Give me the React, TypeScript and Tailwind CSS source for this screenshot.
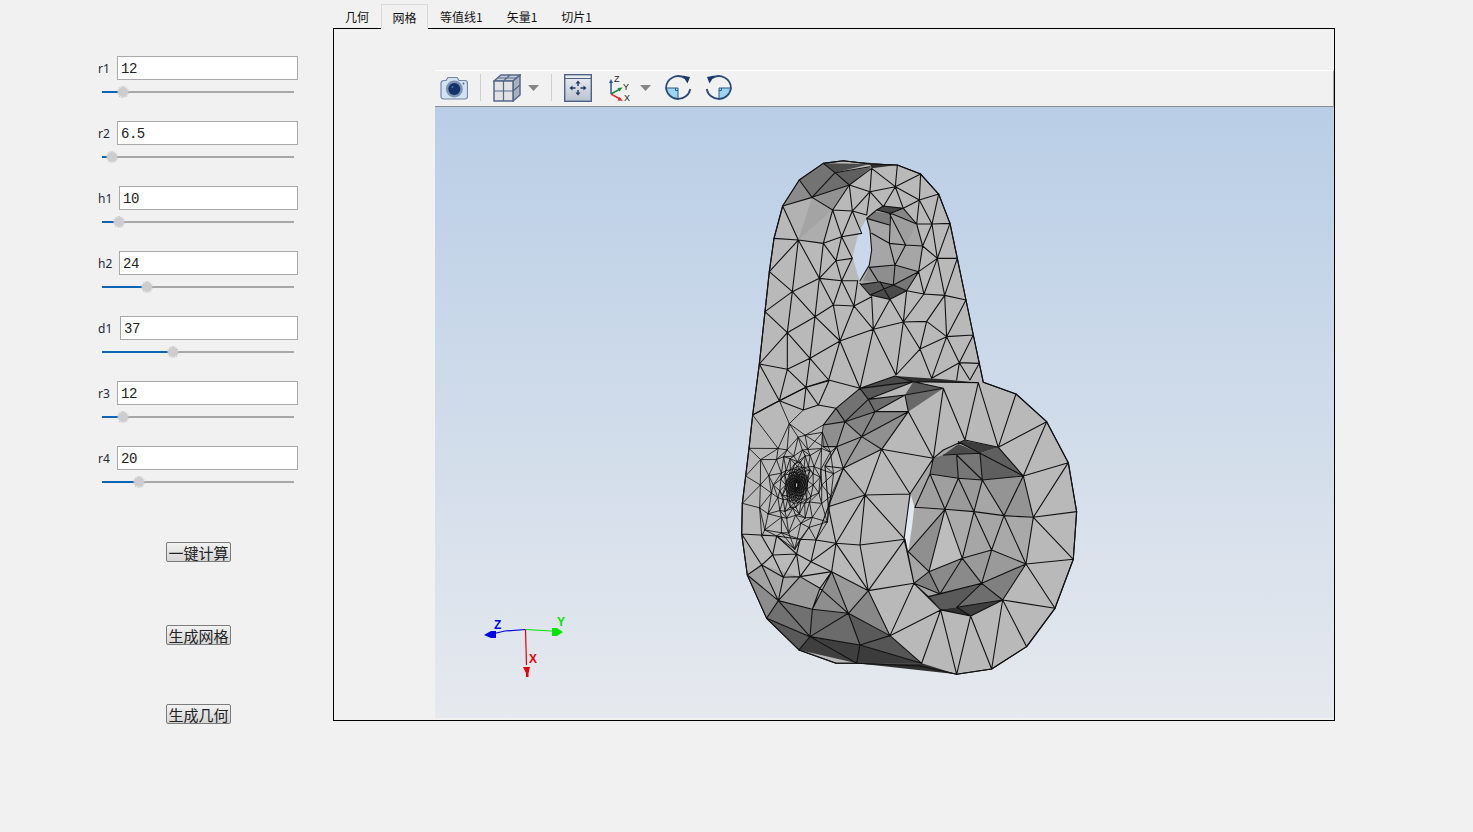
import React from 'react'

const params = [
  { label: 'r1', value: '12', thumb: 123, labelClass: 'w-[19px]' },
  { label: 'r2', value: '6.5', thumb: 112, labelClass: 'w-[19px]' },
  { label: 'h1', value: '10', thumb: 119, labelClass: 'w-[21px]' },
  { label: 'h2', value: '24', thumb: 147, labelClass: 'w-[21px]' },
  { label: 'd1', value: '37', thumb: 173, labelClass: 'w-[22px]' },
  { label: 'r3', value: '12', thumb: 123, labelClass: 'w-[19px]' },
  { label: 'r4', value: '20', thumb: 139, labelClass: 'w-[19px]' },
]

const tabs = ['几何', '网格', '等值线1', '矢量1', '切片1']

// all mesh data is in 3x units, origin at (730,370) of the page
const outline =
  '280,-620 340,-628 420,-618 502,-615 572,-588 626,-528 660,-440 682,-335 708,-210 730,-105 748,-20 760,37 858,72 950,155 1015,278 1040,425 1030,568 975,715 890,830 785,897 680,913 570,888 380,880 318,880 207,840 110,745 52,615 35,492 37,400 47,318 57,235 68,135 88,-18 105,-175 118,-295 132,-395 158,-492 208,-570'

const holeTop =
  '410,-455 440,-480 460,-492 520,-485 560,-438 578,-372 566,-295 530,-238 480,-212 420,-225 390,-260 418,-315 425,-360 420,-420'
const openingTop = '410,-455 420,-420 425,-360 418,-315 390,-268 383,-285 368,-340 385,-410'
const holeFront =
  '610,265 640,240 705,210 805,232 880,318 910,442 888,582 818,690 722,738 632,720 552,640 530,540 522,508 540,372'
const openingFront = '543,375 553,410 546,470 535,542 522,508 530,440'

const shades: [string, string][] = [
  // top of the lug
  ['#4c4c4c', '280,-620 420,-618 315,-592'],
  ['#2e2e2e', '340,-628 502,-615 425,-605 420,-618'],
  ['#5f5f5f', '315,-592 425,-608 358,-555'],
  ['#737373', '208,-570 280,-620 315,-592 246,-518'],
  ['#6e6e6e', '246,-518 315,-592 358,-555'],
  ['#8b8b8b', '158,-492 208,-570 246,-518'],
  ['#929292', '246,-518 358,-555 308,-480'],
  ['#b2b2b2', '158,-492 246,-518 205,-390'],
  ['#a4a4a4', '246,-518 308,-480 205,-390'],
  ['#adadad', '205,-390 308,-480 280,-380'],
  // lug hole
  ['#7a7a7a', '410,-455 430,-475 482,-470 478,-435'],
  ['#454545', '440,-480 460,-492 520,-485 482,-470'],
  ['#868686', '482,-470 520,-485 560,-438'],
  ['#9e9e9e', '482,-470 560,-438 527,-375'],
  ['#8e8e8e', '418,-308 495,-315 566,-295 490,-255 445,-265 400,-268'],
  ['#585858', '395,-257 450,-265 490,-255 420,-225'],
  ['#4a4a4a', '420,-225 490,-255 530,-238 480,-212'],
  ['#777777', '490,-255 566,-295 530,-238'],
  // shoulder of the boss
  ['#4a4a4a', '495,18 550,35 390,55'],
  ['#2f2f2f', '495,18 640,28 745,38 550,35'],
  ['#585858', '390,55 550,35 415,88'],
  ['#5a5a5a', '550,35 640,55 525,75'],
  ['#6b6b6b', '415,88 525,75 435,125'],
  ['#696969', '525,75 640,55 535,125'],
  ['#727272', '390,55 415,88 345,155 318,115'],
  ['#6f6f6f', '415,88 435,125 345,155'],
  ['#848484', '435,125 535,125 395,200 345,155'],
  ['#909090', '535,125 455,238 395,200'],
  ['#838383', '318,115 345,155 280,165'],
  ['#8f8f8f', '280,165 345,155 320,230 280,230'],
  ['#9a9a9a', '395,200 455,238 340,295 320,230'],
  ['#989898', '345,155 395,200 320,230'],
  ['#acacac', '340,295 405,375 295,410'],
  // bottom edge
  ['#a8a8a8', '95,585 210,620 145,692'],
  ['#a2a2a2', '52,615 95,585 145,692'],
  ['#8c8c8c', '52,615 145,692 110,745'],
  ['#9c9c9c', '145,692 210,620 270,655 247,718'],
  ['#717171', '145,692 247,718 240,800 110,745'],
  ['#6b6b6b', '247,718 355,730 390,825 240,800'],
  ['#5a5a5a', '355,730 480,797 390,825'],
  ['#595959', '110,745 240,800 207,840'],
  ['#3f3f3f', '240,800 390,825 380,880 207,840'],
  ['#3c3c3c', '390,825 575,880 380,880'],
  ['#565656', '480,797 575,880 390,825'],
  ['#2f2f2f', '380,880 575,880 680,913'],
  ['#888888', '415,662 480,797 355,730'],
  ['#9a9a9a', '305,605 415,662 355,730'],
  ['#8e8e8e', '247,718 305,605 355,730'],
  // front hole
  ['#3d3d3d', '685,218 705,212 805,232 750,250'],
  ['#4a4a4a', '640,255 685,222 750,250'],
  ['#5f5f5f', '750,250 805,232 880,318 757,330'],
  ['#707070', '610,265 640,255 680,255 685,325 600,312'],
  ['#777777', '680,255 750,250 757,330 685,325'],
  ['#9f9f9f', '600,312 685,325 645,418 555,412'],
  ['#9a9a9a', '685,325 757,330 732,425 645,418'],
  ['#949494', '757,330 880,318 910,442 822,437'],
  ['#8f8f8f', '645,418 535,545 597,605'],
  ['#bdbdbd', '645,418 697,565 597,605'],
  ['#ababab', '645,418 732,425 697,565'],
  ['#a6a6a6', '732,425 822,437 785,540 697,565'],
  ['#a9a9a9', '822,437 910,442 888,582 785,540'],
  ['#9a9a9a', '785,540 888,582 755,640 697,565'],
  ['#808080', '888,582 818,690 755,640'],
  ['#8a8a8a', '697,565 755,640 630,672 597,605'],
  ['#7f7f7f', '552,640 597,605 630,672'],
  ['#5a5a5a', '595,680 755,640 680,712 630,718'],
  ['#6e6e6e', '755,640 818,690 680,712'],
  ['#3f3f3f', '680,712 818,690 722,738'],
  ['#2f2f2f', '630,718 680,712 722,738'],
]

// edges of the lug, y measured 660 above the rest
const lugEdges =
  'M208 90L246 142M246 142L315 68M315 68L280 40M315 68L358 105M358 105L425 55M315 68L420 50M246 142L358 105M158 168L246 142M246 142L308 180M358 105L308 180M358 105L420 125M425 55L420 125M425 55L496 110M502 45L496 110M496 110L572 72M496 110L420 125M496 110L568 150M572 72L568 150M568 150L626 132M568 150L606 222M626 132L606 222M606 222L660 220M606 222L622 325M660 220L622 325M622 325L682 325M568 150L560 222M560 222L606 222M560 222L578 288M606 222L578 288M578 288L622 325M578 288L566 365M622 325L566 365M622 325L582 432M682 325L644 436M622 325L644 436M644 436L708 450M582 432L644 436M566 365L582 432M530 422L582 432M582 432L520 516M644 436L590 514M520 516L590 514M590 514L650 560M644 436L650 560M708 450L650 560M650 560L730 555M650 560L688 638M730 555L688 638M688 638L748 640M650 560L570 597M590 514L570 597M520 516L570 597M520 516L430 538M520 516L498 675M570 597L498 675M570 597L605 685M650 560L605 685M688 638L605 685M688 638L680 690M688 638L720 690M748 640L720 690' +
  'M420 125L367 183M358 105L367 183M308 180L367 183M367 183L410 195M420 125L410 195M420 125L460 170M496 110L460 170M496 110L520 175M568 150L520 175M367 183L335 260M308 180L335 260M308 180L280 280M280 280L335 260M335 260L395 250M367 183L395 250M280 280L318 332M335 260L318 332M335 260L367 325M318 332L367 325M205 270L280 280M205 270L132 265M205 270L158 168M205 270L118 365M205 270L268 385M280 280L268 385M318 332L268 385M318 332L335 392M268 385L335 392M335 392L383 392M367 325L335 392M205 270L187 425M268 385L187 425M118 365L187 425M187 425L105 485M187 425L255 500M268 385L255 500M268 385L310 465M335 392L310 465M335 392L372 468M383 392L372 468M310 465L372 468M255 500L310 465M255 500L330 573M310 465L330 573M372 468L330 573M372 468L430 538M425 440L372 468M425 440L430 538M480 448L430 538M480 448L520 516M530 422L520 516M105 485L172 548M187 425L172 548M255 500L172 548M172 548L88 642M172 548L172 658M88 642L172 658M172 548L240 625M255 500L240 625M330 573L240 625M172 658L240 625M430 538L330 573M430 538L390 715M430 538L498 675M330 573L390 715M330 573L296 690M240 625L296 690M296 690L390 715M240 625L228 712M172 658L228 712M296 690L228 712M172 658L148 752M88 642L148 752M148 752L228 712M148 752L68 795' +
  'M410 205L478 225M482 190L478 280M478 190L527 285M527 285L578 288M527 285L495 345M478 280L527 285M425 250L478 280M478 280L495 345M418 352L495 345M495 345L566 365M495 345L490 405M418 352L445 395M445 395L490 405L566 365M395 403L450 395M450 395L480 448M490 405L530 422M420 435L490 405M410 205L440 180L460 168L520 175L560 222M440 180L482 190L520 175M482 190L560 222M390 400L420 435L480 448L530 422L566 365M410 205L420 240L425 300L418 345L390 392'

const bodyEdges =
  'M640 55L610 265M640 55L705 210M745 38L705 210M745 38L805 232M858 72L805 232M950 155L805 232M950 155L880 318M1015 278L880 318M1015 278L910 442M1040 425L910 442M1030 568L910 442M1030 568L888 582M975 715L888 582M975 715L818 690M890 830L818 690M785 897L818 690M785 897L722 738M680 913L722 738M680 913L632 720M575 880L632 720M480 797L632 720M480 797L552 640M415 662L552 640M415 662L480 797M390 525L415 662M390 525L525 508M525 508L552 640M415 662L525 508M405 375L390 525M405 375L525 508M405 375L540 372M455 238L405 375M455 238L540 372M455 238L610 265M535 125L610 265M535 125L455 238M610 265L540 372' +
  'M295 410L405 375M295 410L318 520M318 520L390 525M295 410L340 295M340 295L405 375M318 520L405 375M318 520L415 662M318 520L305 605M305 605L415 662M305 605L355 730M415 662L355 730M355 730L480 797M355 730L390 825M480 797L390 825M390 825L575 880M480 797L575 880M355 730L247 718M247 718L305 605M247 718L240 800M240 800L355 730M240 800L390 825M145 692L247 718M145 692L110 745M110 745L240 800M207 840L240 800M240 800L380 880M390 825L380 880M145 692L240 800' +
  'M68 135L148 92M228 52L148 92M228 52L297 32M228 52L265 105M265 105L297 32M265 105L318 115M148 92L220 120M220 120L265 105M228 52L220 120M35 492L140 498L210 508L258 510L318 520M52 615L95 585M95 585L128 555M128 555L95 498M95 585L35 492M95 585L160 622M128 555L160 622M128 555L200 552M200 552L160 622M200 552L210 620M200 552L243 575M243 575L258 510M243 575L210 620M243 575L305 605M243 575L318 520M210 620L305 605M210 620L270 655M270 655L305 605M160 622L145 692M160 622L210 620M210 620L145 692M270 655L247 718M270 655L355 730M52 615L145 692M95 585L145 692M210 510L200 552M140 498L128 555M140 498L200 552M295 410L258 510M340 295L285 288M285 288L295 410M320 230L285 288M320 230L340 295M320 230L280 230M395 200L320 230M395 200L340 295M345 155L320 230M345 155L280 165M345 155L395 200M415 88L345 155M435 125L345 155M435 125L395 200M535 125L395 200M455 238L395 200M455 238L340 295M390 55L415 88M415 88L435 125M415 88L525 75M525 75L535 125M435 125L525 75M435 125L535 125M525 75L640 55M390 55L550 35M415 88L550 35M550 35L640 55M745 38L550 35M495 18L550 35M318 115L390 55M318 115L345 155M280 165L318 115M495 18L390 55' +
  'M610 265L600 312M600 312L685 325M685 325L757 330M757 330L880 318M680 255L685 325M680 255L757 330M750 250L757 330M750 250L880 318M640 255L750 250M685 215L750 250M600 312L645 418M685 325L645 418M685 325L732 425M757 330L732 425M757 330L822 437M880 318L822 437M880 318L910 442M555 412L645 418L732 425L822 437L910 442M600 312L555 412M645 418L535 545M645 418L597 605M645 418L697 565M732 425L697 565M732 425L785 540M822 437L785 540M822 437L888 582M597 605L697 565L785 540L888 582M535 545L597 605M597 605L552 640M597 605L630 672M697 565L630 672M697 565L755 640M785 540L755 640M888 582L755 640M888 582L818 690M755 640L818 690M630 672L755 640M552 640L630 672M595 680L755 640M630 672L595 680M595 680L630 718M680 712L755 640M680 712L818 690M630 718L722 738M680 712L722 738M722 738L818 690M552 640L595 680M610 265L640 240L705 210L805 232L880 318L910 442L888 582L818 690L722 738L632 720L552 640L530 540L522 508L540 372'

// coarse points that the fine mesh hands over to
const rim: [number, number][] = [
  [47, 318], [37, 400], [57, 235], [68, 135], [148, 92], [220, 120], [265, 105], [318, 115],
  [280, 165], [280, 230], [320, 230], [340, 295], [285, 288], [295, 410], [318, 520], [258, 510],
  [210, 508], [140, 498], [95, 498], [35, 492],
]

// fine mesh round the point at the back of the part
const fineMesh = () => {
  const rings = [0.04, 0.07, 0.1, 0.13, 0.16, 0.19, 0.22, 0.25, 0.29, 0.35, 0.44, 0.56, 0.74, 1]
  const spokes = 15
  const at = (r: number, s: number): [number, number] => {
    const t = rings[r]
    const a = ((s + (r % 2) * 0.5) / spokes) * Math.PI * 2
    const wob = 1 + (t > 0.3 ? 0.14 * Math.sin(s * 2.7 + r * 1.9) : 0)
    const dy = Math.sin(a) * 170 * Math.pow(t, 0.9) * wob
    const dx = Math.cos(a) * 115 * Math.pow(t, 1.05) * wob
    return [200 + dx - dy * 0.1, 345 + dy]
  }
  const seg = (p: [number, number], q: [number, number]) =>
    `M${p[0].toFixed(1)} ${p[1].toFixed(1)}L${q[0].toFixed(1)} ${q[1].toFixed(1)}`
  let d = ''
  for (let r = 0; r < rings.length; r++) {
    for (let s = 0; s < spokes; s++) {
      const p = at(r, s)
      d += seg(p, at(r, (s + 1) % spokes))
      if (r < rings.length - 1) {
        d += seg(p, at(r + 1, s))
        d += seg(p, at(r + 1, r % 2 ? (s + 1) % spokes : (s + spokes - 1) % spokes))
      } else {
        const near = [...rim].sort(
          (m, n) => Math.hypot(m[0] - p[0], m[1] - p[1]) - Math.hypot(n[0] - p[0], n[1] - p[1]),
        )
        d += seg(p, near[0]) + seg(p, near[1])
      }
    }
  }
  return d
}

const Part = () => (
  <g transform="translate(730 370) scale(0.3333)" strokeLinejoin="round" strokeLinecap="round">
    <polygon points={outline} fill="#b9b9b9" stroke="#111" strokeWidth="3.3" />
    <polygon points={holeTop} fill="#a6a6a6" />
    <polygon points={holeFront} fill="#a6a6a6" />
    {shades.map(([fill, points], i) => (
      <polygon key={i} points={points} fill={fill} />
    ))}
    <polygon points={openingTop} fill="#c9d8ea" />
    <polygon points={openingFront} fill="#e2e8f0" />
    <path d={fineMesh()} fill="none" stroke="#111" strokeWidth="2.6" />
    <path d={bodyEdges} fill="none" stroke="#111" strokeWidth="3.3" />
    <g transform="translate(0 -660)">
      <path d={lugEdges} fill="none" stroke="#111" strokeWidth="3.3" />
    </g>
    <polygon points={outline} fill="none" stroke="#111" strokeWidth="3.3" />
  </g>
)

const Triad = () => (
  <g>
    <path d="M525.5 629.5L505 631L492 634" fill="none" stroke="#0000e6" strokeWidth="1.2" />
    <path d="M525.5 629.5L552 631" fill="none" stroke="#00e600" strokeWidth="1.2" />
    <path d="M525.5 629.5L526.5 665" fill="none" stroke="#e60000" strokeWidth="1.2" />
    <polygon points="484,635 491,631 496,631 496,638 491,638" fill="#0000e6" />
    <polygon points="552,628 557,628 563,632 557,636 552,636" fill="#00e600" />
    <polygon points="523,667 530,667 528.5,673 528.5,677 526,677 526,673" fill="#e60000" />
    <text x="494" y="629" fontSize="12" fontWeight="700" fill="#0000e6" fontFamily="'Liberation Sans', sans-serif">Z</text>
    <text x="557" y="626" fontSize="12" fontWeight="700" fill="#00e600" fontFamily="'Liberation Sans', sans-serif">Y</text>
    <text x="529" y="663" fontSize="12" fontWeight="700" fill="#e60000" fontFamily="'Liberation Sans', sans-serif">X</text>
  </g>
)

const Caret = () => (
  <svg width="11" height="6" viewBox="0 0 11 6" className="shrink-0">
    <polygon points="0,0 11,0 5.5,6" fill="#858585" />
  </svg>
)

const Separator = () => <div className="h-[27px] w-px bg-[#cfcfcf] shrink-0" />

const CameraIcon = () => (
  <svg width="28" height="28" viewBox="0 0 28 28" className="shrink-0">
    <path d="M1 9.5Q1 6.5 4 6.5L6 6.5L8 3.5L17 3.5L19 6.5L25 6.5Q27.5 6.5 27.5 9.5L27.5 22.5Q27.5 25 25 25L4 25Q1 25 1 22.5Z" fill="#d5e1ef" stroke="#7186a5" strokeWidth="1.2" />
    <circle cx="14.3" cy="15" r="8.5" fill="#7d93b4" />
    <circle cx="14.3" cy="15" r="6" fill="#14316a" />
    <circle cx="12.5" cy="13" r="1" fill="#4f6da3" />
    <circle cx="23.5" cy="9.5" r="0.9" fill="#46608c" />
  </svg>
)

const CubeIcon = () => (
  <svg width="28" height="28" viewBox="0 0 28 28" className="shrink-0">
    <polygon points="1,7 8,1 27,1 20,7" fill="#c9cdd5" stroke="#55688a" strokeWidth="1.5" />
    <polygon points="20,7 27,1 27,21 20,27" fill="#a9b1c0" stroke="#55688a" strokeWidth="1.5" />
    <rect x="1" y="7" width="19" height="20" fill="#e2e2e2" stroke="#55688a" strokeWidth="1.5" />
    <path d="M10.5 7V27M1 17H20M20 17L27 11M10.5 7L17 1M5 4H23.5" fill="none" stroke="#55688a" strokeWidth="1.2" />
  </svg>
)

const FitIcon = () => (
  <svg width="28" height="28" viewBox="0 0 28 28" className="shrink-0">
    <defs>
      <linearGradient id="fitFill" x1="0" y1="0" x2="0" y2="1">
        <stop offset="0" stopColor="#eeeef2" />
        <stop offset="1" stopColor="#b9c1d0" />
      </linearGradient>
    </defs>
    <rect x="0.7" y="0.7" width="26.6" height="26.6" fill="url(#fitFill)" stroke="#4d6285" strokeWidth="1.4" />
    <path d="M1 4.5H27" stroke="#4d6285" strokeWidth="1" />
    <path d="M14 9V12M14 16V19M8 14H11.5M16.5 14H20" stroke="#1f3a63" strokeWidth="1.4" />
    <path d="M14 6.5L11.5 9.5H16.5ZM14 21.5L11.5 18.5H16.5ZM5.5 14L8.5 11.5V16.5ZM22.5 14L19.5 11.5V16.5Z" fill="#1f3a63" />
  </svg>
)

const AxesIcon = () => (
  <svg width="24" height="28" viewBox="0 0 24 28" className="shrink-0 overflow-visible">
    <path d="M2 20V8" stroke="#2a50a8" strokeWidth="1.5" />
    <polygon points="2,5 0,9 4,9" fill="#2a50a8" />
    <path d="M2 20L11 15" stroke="#1f8a3c" strokeWidth="1.5" />
    <polygon points="13.5,13.5 8.5,14 10.5,17.5" fill="#1f8a3c" />
    <path d="M2 20L11 25" stroke="#e03030" strokeWidth="1.5" />
    <polygon points="14,27 8.5,26.5 10.5,23" fill="#e03030" />
    <text x="5" y="8" fontSize="9" fill="#222" fontFamily="'Liberation Sans', sans-serif">Z</text>
    <text x="14" y="16" fontSize="9" fill="#222" fontFamily="'Liberation Sans', sans-serif">Y</text>
    <text x="15" y="27" fontSize="9" fill="#222" fontFamily="'Liberation Sans', sans-serif">X</text>
  </svg>
)

const RotateIcon = ({ flip = false }: { flip?: boolean }) => (
  <svg width="28" height="28" viewBox="0 0 28 28" className="shrink-0">
    <g transform={flip ? 'translate(28 0) scale(-1 1)' : undefined}>
      <path d="M2 14H14V26A12 12 0 0 1 2 14Z" fill="#9dd4f0" />
      <path d="M2 14H14V26M11.5 14V16.5H14" fill="none" stroke="#2c5a8c" strokeWidth="1" />
      <path d="M2 14A12.2 12.2 0 0 1 21 4.2" fill="none" stroke="#2c4a78" strokeWidth="1.8" />
      <path d="M26.3 15A12.3 12.3 0 0 1 2 14" fill="none" stroke="#2c4a78" strokeWidth="1.8" />
      <polygon points="18.5,1.5 26,3 23.5,9.5" fill="#1c3a68" />
    </g>
  </svg>
)

const Toolbar = () => (
  <div className="h-[37px] pb-[2px] flex items-center border-t border-t-white border-b border-b-[#8c8c8c] border-r border-r-[#a8a8a8] bg-[#f1f1f1] shrink-0">
    <div className="ml-[5px]"><CameraIcon /></div>
    <div className="ml-[12px]"><Separator /></div>
    <div className="ml-[12px]"><CubeIcon /></div>
    <div className="ml-[7px]"><Caret /></div>
    <div className="ml-[12px]"><Separator /></div>
    <div className="ml-[12px]"><FitIcon /></div>
    <div className="ml-[17px]"><AxesIcon /></div>
    <div className="ml-[7px]"><Caret /></div>
    <div className="ml-[13px]"><RotateIcon /></div>
    <div className="ml-[13px]"><RotateIcon flip /></div>
  </div>
)

const ParamRow = ({ label, value, thumb, labelClass }: { label: string; value: string; thumb: number; labelClass: string }) => (
  <div className="h-[65px] pl-[98px] w-[298px] box-content">
    <div className="w-[200px] h-[24px] flex items-center">
      <span className={`text-[12px] pt-[2px] text-[#1f2a3a] shrink-0 font-['Noto_Sans',sans-serif] ${labelClass}`}>
        {label}
      </span>
      <div className="flex-1 h-[24px] pt-[2px] bg-white border border-[#a9a9a9] pl-[3px] flex items-center text-[14px] tracking-[-0.5px] text-[#222] font-['Liberation_Mono',monospace]">
        {value}
      </div>
    </div>
    <div className="relative ml-[4px] w-[192px] h-[23px] flex items-center">
      <div className="w-full h-[2px] bg-[#a8a8a8]" />
      <div className="absolute left-0 h-[2px] bg-[#0c66b8]" style={{ width: thumb - 102 }} />
      <div
        className="absolute w-[10px] h-[10px] rounded-full bg-[#cdcdcd] top-[6.5px] outline-1 outline-dotted outline-[#c4c4c4]"
        style={{ left: thumb - 102 - 5 }}
      />
    </div>
  </div>
)

const ActionButton = ({ children, className }: { children: React.ReactNode; className: string }) => (
  <button
    className={`block w-[65px] h-[20px] ml-[166px] rounded-[2px] border border-[#7c7c7c] bg-gradient-to-b from-[#f2f2f2] to-[#d6d6d6] text-[15px] leading-[17px] text-[#222] text-center font-['Noto_Sans_CJK_SC',sans-serif] whitespace-nowrap overflow-hidden ${className}`}
  >
    {children}
  </button>
)

export default function App() {
  return (
    <div className="w-[1473px] h-[832px] bg-[#f1f1f1] flex overflow-hidden">
      {/* Parameter column */}
      <div className="w-[333px] shrink-0 pt-[56px]">
        {params.map((p) => (
          <ParamRow key={p.label} {...p} />
        ))}
        <ActionButton className="mt-[31px]">一键计算</ActionButton>
        <ActionButton className="mt-[63px]">生成网格</ActionButton>
        <ActionButton className="mt-[59px]">生成几何</ActionButton>
      </div>

      {/* Tabs and viewer */}
      <div className="w-[1002px] shrink-0 pt-[4px] font-['Noto_Sans_CJK_SC',sans-serif]">
        <div className="h-[24px] flex relative z-10">
          {tabs.map((t, i) => (
            <div
              key={t}
              className={
                i === 1
                  ? 'h-[25px] w-[47px] pt-[2px] flex items-center justify-center text-[12px] text-[#111] bg-[#f1f1f1] border border-b-0 border-[#d9d9d9]'
                  : 'h-[24px] px-[12px] pt-[2px] flex items-center text-[12px] text-[#111]'
              }
            >
              {t}
            </div>
          ))}
        </div>
        <div className="h-[693px] border border-black pt-[41px] pl-[101px] pb-[2px] flex flex-col">
          <Toolbar />
          <div className="flex-1 min-h-0 bg-gradient-to-b from-[#b9cee6] to-[#e6e9ee]">
            <svg viewBox="435 107 899 611" className="w-full h-full block">
              <Part />
              <Triad />
            </svg>
          </div>
        </div>
      </div>
    </div>
  )
}
